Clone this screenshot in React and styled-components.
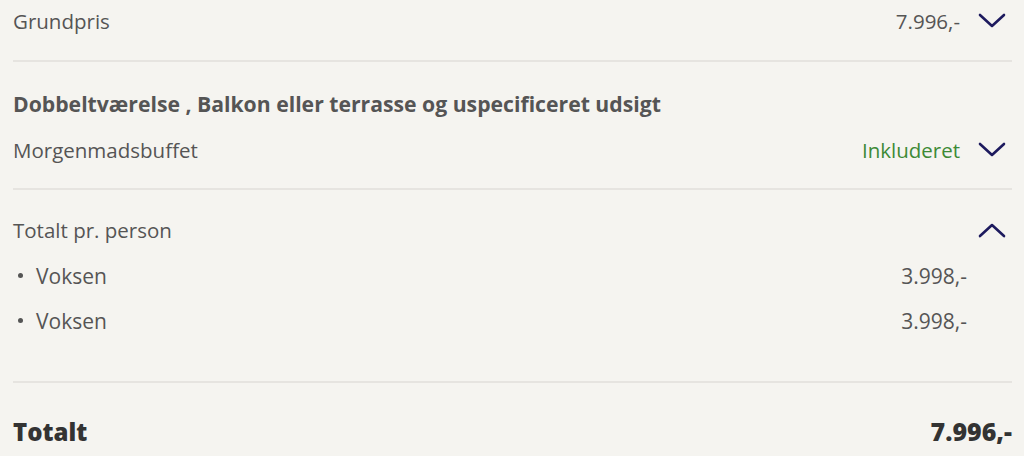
import React from "react";
import styled, { createGlobalStyle } from "styled-components";

const Global = createGlobalStyle`
  html, body { margin: 0; padding: 0; background: #f5f4f0; }
  body { font-family: "Open Sans", Lato, sans-serif; color: #555; }
`;

const Page = styled.div`
  width: 1024px;
  height: 456px;
  overflow: hidden;
  box-sizing: border-box;
  padding: 0 12px 0 13px;
  background: #f5f4f0;
`;

const Section = styled.section`
  border-bottom: ${(p) => (p.$last ? "none" : "2px solid #e6e4e0")};
  padding: ${(p) => p.$pad || "0"};
`;

const Row = styled.div`
  display: flex;
  align-items: center;
  height: ${(p) => p.$h || "42px"};
  margin-top: ${(p) => p.$mt || "0"};
  font-size: 20.5px;
`;

const Label = styled.span`
  flex: 1;
  color: #555;
`;

const Value = styled.span`
  color: ${(p) => (p.$green ? "#3d8a36" : "#555")};
`;

const Toggle = styled.span`
  width: 28px;
  margin-left: 18px;
  margin-right: 6px;
  display: flex;
  align-items: center;
  justify-content: center;
`;

const Heading = styled.div`
  font-size: 21.2px;
  font-weight: 700;
  color: #555;
  height: 42px;
  display: flex;
  align-items: center;
`;

const List = styled.ul`
  list-style: none;
  margin: 0;
  padding: 0 45px 0 0;
`;

const Item = styled.li`
  display: flex;
  align-items: center;
  height: 45px;
  font-size: 21px;
  &:first-child { margin-top: 2px; }
  &::before {
    content: "";
    width: 5px;
    height: 5px;
    border-radius: 50%;
    background: #555;
    margin: 0 13px 0 5px;
  }
`;

const Total = styled.div`
  display: flex;
  align-items: center;
  justify-content: space-between;
  height: 96px;
  font-size: 24px;
  font-weight: 800;
  color: #333;
`;

const Price = styled.span`
  font-size: 25px;
`;

const Chevron = ({ up }) => (
  <svg width="28" height="16" viewBox="0 0 28 16">
    <polyline
      points={up ? "2,14 14,3 26,14" : "2,2 14,13 26,2"}
      fill="none"
      stroke="#1d1a5e"
      strokeWidth="2.6"
      strokeLinecap="round"
      strokeLinejoin="round"
    />
  </svg>
);

export default function App() {
  return (
    <Page>
      <Global />
      <Section $pad="0 0 18px">
        <Row>
          <Label>Grundpris</Label>
          <Value>7.996,-</Value>
          <Toggle><Chevron /></Toggle>
        </Row>
      </Section>
      <Section $pad="20px 0 17px">
        <Heading>Dobbeltværelse , Balkon eller terrasse og uspecificeret udsigt</Heading>
        <Row $mt="5px">
          <Label>Morgenmadsbuffet</Label>
          <Value $green>Inkluderet</Value>
          <Toggle><Chevron /></Toggle>
        </Row>
      </Section>
      <Section $pad="19px 0 38px">
        <Row>
          <Label>Totalt pr. person</Label>
          <Toggle><Chevron up /></Toggle>
        </Row>
        <List>
          <Item><Label>Voksen</Label><Value>3.998,-</Value></Item>
          <Item><Label>Voksen</Label><Value>3.998,-</Value></Item>
        </List>
      </Section>
      <Section $last>
        <Total>
          <span>Totalt</span>
          <Price>7.996,-</Price>
        </Total>
      </Section>
    </Page>
  );
}
